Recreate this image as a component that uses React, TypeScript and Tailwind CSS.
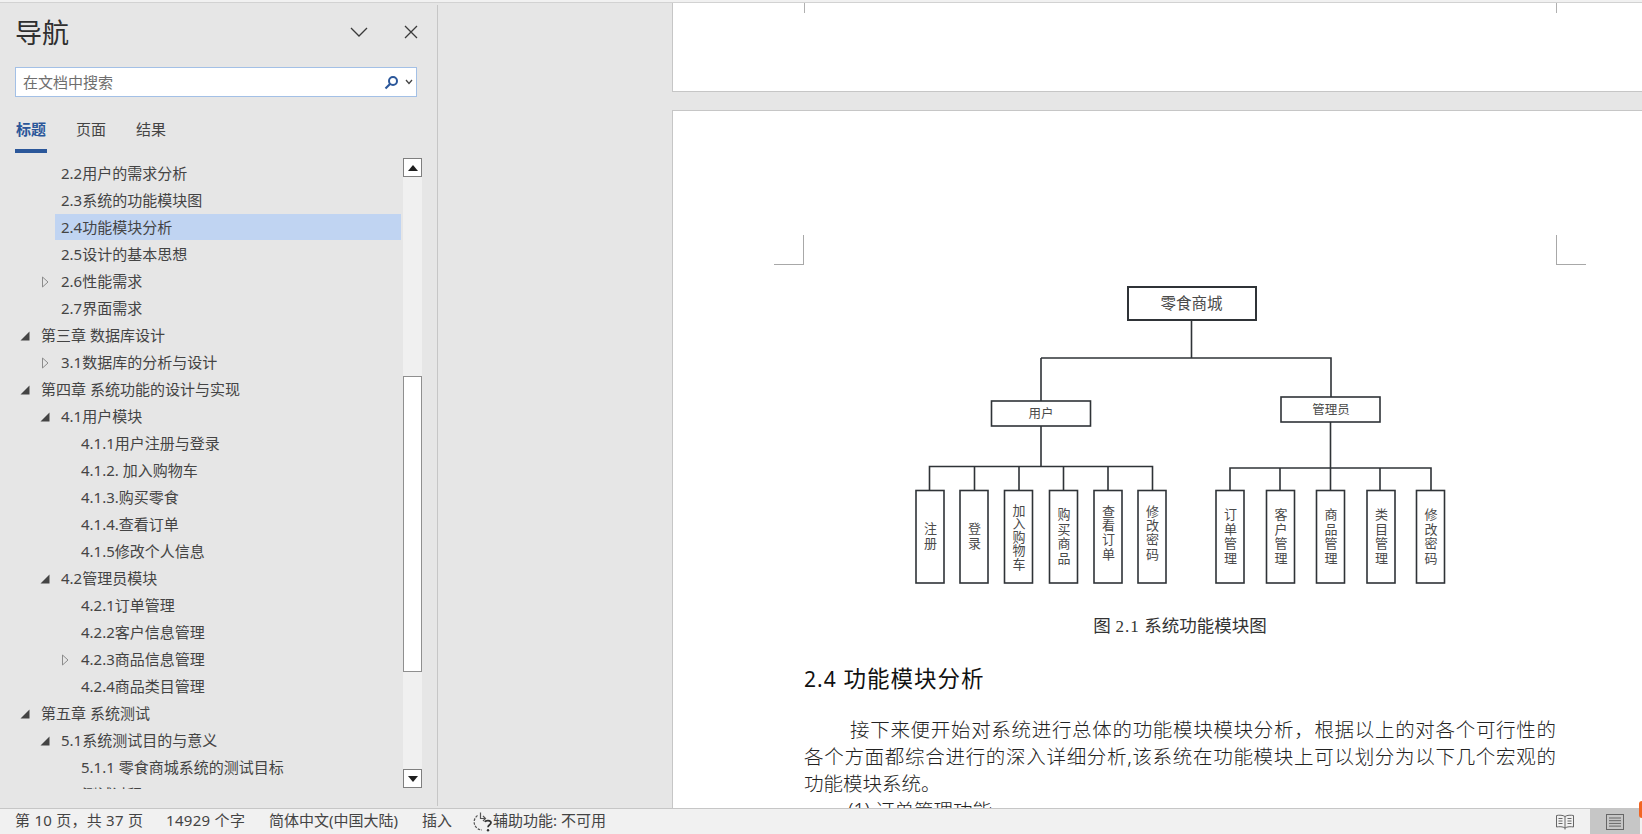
import React from "react";

type TreeRow = {
  text: string;
  level: 0 | 1 | 2;
  icon?: "open" | "closed";
  selected?: boolean;
};

const rows: TreeRow[] = [
  { text: "2.2用户的需求分析", level: 1 },
  { text: "2.3系统的功能模块图", level: 1 },
  { text: "2.4功能模块分析", level: 1, selected: true },
  { text: "2.5设计的基本思想", level: 1 },
  { text: "2.6性能需求", level: 1, icon: "closed" },
  { text: "2.7界面需求", level: 1 },
  { text: "第三章 数据库设计", level: 0, icon: "open" },
  { text: "3.1数据库的分析与设计", level: 1, icon: "closed" },
  { text: "第四章 系统功能的设计与实现", level: 0, icon: "open" },
  { text: "4.1用户模块", level: 1, icon: "open" },
  { text: "4.1.1用户注册与登录", level: 2 },
  { text: "4.1.2. 加入购物车", level: 2 },
  { text: "4.1.3.购买零食", level: 2 },
  { text: "4.1.4.查看订单", level: 2 },
  { text: "4.1.5修改个人信息", level: 2 },
  { text: "4.2管理员模块", level: 1, icon: "open" },
  { text: "4.2.1订单管理", level: 2 },
  { text: "4.2.2客户信息管理", level: 2 },
  { text: "4.2.3商品信息管理", level: 2, icon: "closed" },
  { text: "4.2.4商品类目管理", level: 2 },
  { text: "第五章 系统测试", level: 0, icon: "open" },
  { text: "5.1系统测试目的与意义", level: 1, icon: "open" },
  { text: "5.1.1 零食商城系统的测试目标", level: 2 },
  { text: "5.2测试过程", level: 1, icon: "open" },
];

const levelPadding = ["pl-[20px]", "pl-[40px]", "pl-[60px]"];

// leaf boxes of the diagram: [left edge, label, vertical centre, glyph spacing]
const leaves: [number, string, number, number][] = [
  [916, "注册", 537, 2],
  [960, "登录", 537, 2],
  [1004.5, "加入购物车", 537, 0.5],
  [1049.5, "购买商品", 537, 1.6],
  [1094, "查看订单", 533, 1.4],
  [1138, "修改密码", 533, 1.4],
  [1216, "订单管理", 537, 1.6],
  [1266.5, "客户管理", 537, 1.6],
  [1316.5, "商品管理", 537, 1.6],
  [1367, "类目管理", 537, 1.6],
  [1416.5, "修改密码", 537, 1.6],
];

function TreeIcon({ type }: { type?: "open" | "closed" }) {
  if (type === "open") {
    return (
      <svg width="10" height="10" viewBox="0 0 10 10" className="shrink-0">
        <polygon points="9.5,0.5 9.5,9.5 0.5,9.5" fill="#444444" />
      </svg>
    );
  }
  if (type === "closed") {
    return (
      <svg width="10" height="12" viewBox="0 0 10 12" className="shrink-0">
        <polygon points="2.5,1 8,6 2.5,11" fill="none" stroke="#8c8c8c" />
      </svg>
    );
  }
  return <span className="block w-[10px] shrink-0" />;
}

function Row({ row }: { row: TreeRow }) {
  if (row.selected) {
    return (
      <div className="h-[27px] pl-[55px] pr-[2px]">
        <div className="flex h-[26px] items-center bg-[#c0d4f2] pl-[6px] text-[15px] leading-none text-[#444444]">
          {row.text}
        </div>
      </div>
    );
  }
  return (
    <div className={`flex h-[27px] items-center text-[15px] leading-none text-[#444444] ${levelPadding[row.level]}`}>
      <TreeIcon type={row.icon} />
      <span className="ml-[11px] whitespace-nowrap">{row.text}</span>
    </div>
  );
}

function Scrollbar() {
  return (
    <div className="flex h-[630px] w-[19px] shrink-0 flex-col bg-[#f0f0f0]">
      <div className="flex h-[19px] items-center justify-center border border-[#7f7f7f] bg-white">
        <svg width="10" height="6" viewBox="0 0 10 6">
          <polygon points="5,0 10,6 0,6" fill="#1f1f1f" />
        </svg>
      </div>
      <div className="mt-[199px] h-[296px] border border-[#8f8f8f] bg-white" />
      <div className="mt-auto flex h-[19px] items-center justify-center border border-[#7f7f7f] bg-white">
        <svg width="10" height="6" viewBox="0 0 10 6">
          <polygon points="0,0 10,0 5,6" fill="#1f1f1f" />
        </svg>
      </div>
    </div>
  );
}

function NavPane() {
  return (
    <aside className="my-[2px] flex w-[438px] shrink-0 flex-col overflow-hidden border-r border-[#c6c6c6]">
      <div className="flex h-[54px] shrink-0 items-center pl-[15px]">
        <h1 className="text-[27px] leading-none font-normal text-[#2f2f2f]">导航</h1>
        <svg width="18" height="10" viewBox="0 0 18 10" className="ml-[281px]">
          <polyline points="1,1 9,9 17,1" fill="none" stroke="#3a3a3a" strokeWidth="1.3" />
        </svg>
        <svg width="14" height="14" viewBox="0 0 14 14" className="ml-[36px]">
          <path d="M1 1L13 13M13 1L1 13" stroke="#3a3a3a" strokeWidth="1.3" />
        </svg>
      </div>

      <div className="ml-[15px] mt-[8px] flex h-[30px] w-[402px] shrink-0 items-center border border-[#a3c0e6] bg-white pl-[7px]">
        <span className="text-[15px] leading-none text-[#6e6e6e]">在文档中搜索</span>
        <svg width="15" height="15" viewBox="0 0 15 15" className="ml-auto">
          <circle cx="9" cy="6" r="4" fill="none" stroke="#2b579a" strokeWidth="2" />
          <path d="M6 9L1.5 13.5" stroke="#2b579a" strokeWidth="2.2" />
        </svg>
        <svg width="8" height="6" viewBox="0 0 8 6" className="ml-[6px] mr-[3px]">
          <polyline points="1,1 4,4.5 7,1" fill="none" stroke="#444444" strokeWidth="1.3" />
        </svg>
      </div>

      <div className="ml-[15px] mt-[19px] flex shrink-0 gap-[28px] text-[15px] leading-none text-[#444444]">
        <div className="flex w-[32px] flex-col">
          <span className="h-[30px] pt-[6px] pl-[1px] font-bold whitespace-nowrap text-[#2b579a]">标题</span>
          <span className="mt-[3px] h-[4px] bg-[#2b579a]" />
        </div>
        <span className="pt-[6px] pl-[1px]">页面</span>
        <span className="pt-[6px] pl-[2px]">结果</span>
      </div>

      <div className="mt-[5px] flex h-[631px] shrink-0 items-start">
        <div className="h-[631px] w-[403px] shrink-0 overflow-hidden pt-[2px]">
          {rows.map((row) => (
            <Row key={row.text} row={row} />
          ))}
        </div>
        <Scrollbar />
      </div>
    </aside>
  );
}

function Diagram() {
  const ink = "#2f3337";
  const label = "#4a4a4a";
  return (
    <svg viewBox="804 280 752 320" width="752" height="320" className="block">
      <g fill="none" stroke={ink} strokeWidth="1.6">
        <rect x="1128" y="287" width="128" height="33" strokeWidth="2" />
        <rect x="991.5" y="401" width="99" height="25" />
        <rect x="1281" y="397" width="99" height="25" />
        <path d="M1191.5 320V358M1041 358H1331V397M1041 358V401" />
        <path d="M1041 426V466.5M929.5 490V466.5H1152.5V490M974.5 466.5V490M1019 466.5V490M1063.5 466.5V490M1108 466.5V490" />
        <path d="M1330.5 422V490M1230 490V468H1431V490M1280 468V490M1380 468V490" />
        {leaves.map(([x]) => (
          <rect key={x} x={x} y="490.5" width="28" height="92.5" />
        ))}
      </g>
      <g fill={label} textAnchor="middle">
        <text x="1191.5" y="309" fontSize="15.5">零食商城</text>
        <text x="1041" y="418" fontSize="12.5">用户</text>
        <text x="1331" y="414" fontSize="12.5">管理员</text>
        {leaves.map(([x, name, cy, spacing]) => (
          <text key={x} x={x + 14} y={cy} fontSize="13" writingMode="vertical-rl" letterSpacing={spacing}>
            {name}
          </text>
        ))}
      </g>
    </svg>
  );
}

function DocPane() {
  return (
    <main className="flex min-w-0 flex-1 flex-col gap-[18px] overflow-hidden pl-[234px]">
      <section className="h-[89px] shrink-0 border-b border-l border-[#c6c6c6] bg-white">
        <div className="flex justify-between pl-[131px] pr-[85px]">
          <span className="h-[10px] w-px bg-[#b0b0b0]" />
          <span className="h-[10px] w-px bg-[#b0b0b0]" />
        </div>
      </section>

      <section className="min-h-0 flex-1 border-t border-l border-[#c6c6c6] bg-white">
        <div className="mt-[124px] flex justify-between pl-[101px] pr-[56px]">
          <span className="h-[30px] w-[30px] border-r border-b border-[#a8a8a8]" />
          <span className="h-[30px] w-[30px] border-l border-b border-[#a8a8a8]" />
        </div>

        <div className="ml-[131px] mt-[15px] w-[752px]">
          <Diagram />
          <p className="mt-[13px] text-center text-[17.5px] leading-[24px] text-[#333333]">
            图 <span className="font-['Liberation_Serif',serif] text-[17px] tracking-[1px]">2.1</span> 系统功能模块图
          </p>
          <h2 className="mt-[25px] text-[22.5px] leading-[30px] font-normal tracking-[1px] text-[#111111]">
            <span className="text-[21px]">2.4</span> 功能模块分析
          </h2>
          <div className="mt-[22px] text-[19.5px] leading-[27px] font-light text-[#222222]">
            <p className="pl-[46px] text-justify [text-align-last:justify]">
              接下来便开始对系统进行总体的功能模块模块分析，根据以上的对各个可行性的
            </p>
            <p className="text-justify [text-align-last:justify]">
              各个方面都综合进行的深入详细分析,该系统在功能模块上可以划分为以下几个宏观的
            </p>
            <p>功能模块系统。</p>
            <p className="pl-[44px]">(1) 订单管理功能。</p>
          </div>
        </div>
      </section>
    </main>
  );
}

function StatusBar() {
  return (
    <footer className="relative flex h-[26px] shrink-0 items-center border-t border-[#c6c6c6] bg-[#f1f1f1] pl-[15px] text-[15px] leading-none text-[#444444]">
      <span className="w-[151px] pb-[2px] tracking-[0.25px] whitespace-nowrap">第 10 页，共 37 页</span>
      <span className="w-[103px] pb-[2px] tracking-[0.3px] whitespace-nowrap">14929 个字</span>
      <span className="w-[153px] pb-[2px] whitespace-nowrap">简体中文(中国大陆)</span>
      <span className="w-[51px] pb-[2px] whitespace-nowrap">插入</span>
      <svg width="20" height="20" viewBox="0 0 20 20" className="shrink-0">
        <path d="M4.5 3.5A8 8 0 0 0 9 18" fill="none" stroke="#555555" strokeWidth="1.2" strokeDasharray="2.6 1.2" />
        <path d="M7.5 0.5V6.5H12.5M10 4L12.5 6.5L10 9" fill="none" stroke="#555555" strokeWidth="1.2" />
        <path d="M12 10c0.5-2 6-2 6 0.8c0 2-3 2-3 4.4" fill="none" stroke="#333333" strokeWidth="1.7" />
        <circle cx="15" cy="18.2" r="1.2" fill="#333333" />
      </svg>
      <span className="pb-[2px] whitespace-nowrap">辅助功能: 不可用</span>

      <svg width="18" height="16" viewBox="0 0 18 16" className="ml-auto shrink-0">
        <path d="M9 2.5C7 1 3 1 0.5 1.5V13C3 12.5 7 12.5 9 14C11 12.5 15 12.5 17.5 13V1.5C15 1 11 1 9 2.5ZM9 2.5V15.5M2.5 4.5H6.5M2.5 7H6.5M2.5 9.5H6.5M11.5 4.5H15.5M11.5 7H15.5M11.5 9.5H15.5" fill="none" stroke="#666666" />
      </svg>
      <div className="ml-[16px] mr-[2px] flex h-full w-[50px] items-center justify-center bg-[#c6c6c6]">
        <svg width="18" height="16" viewBox="0 0 18 16">
          <rect x="0.5" y="0.5" width="17" height="15" fill="none" stroke="#666666" />
          <path d="M3 4H15M3 6.7H15M3 9.4H15M3 12.1H15" stroke="#666666" />
        </svg>
      </div>
      <span className="absolute top-[-8px] right-0 h-[17px] w-[3px] rounded-l-full bg-[#f26522]" />
    </footer>
  );
}

export default function App() {
  return (
    <div
      lang="zh-CN"
      className="flex h-[834px] w-[1642px] flex-col overflow-hidden bg-[#e6e6e6] font-['Noto_Sans','Noto_Sans_CJK_SC',sans-serif]"
    >
      <div className="h-[3px] shrink-0 border-b border-[#d2d2d2] bg-[#f1f1f1]" />
      <div className="flex min-h-0 flex-1">
        <NavPane />
        <DocPane />
      </div>
      <StatusBar />
    </div>
  );
}
